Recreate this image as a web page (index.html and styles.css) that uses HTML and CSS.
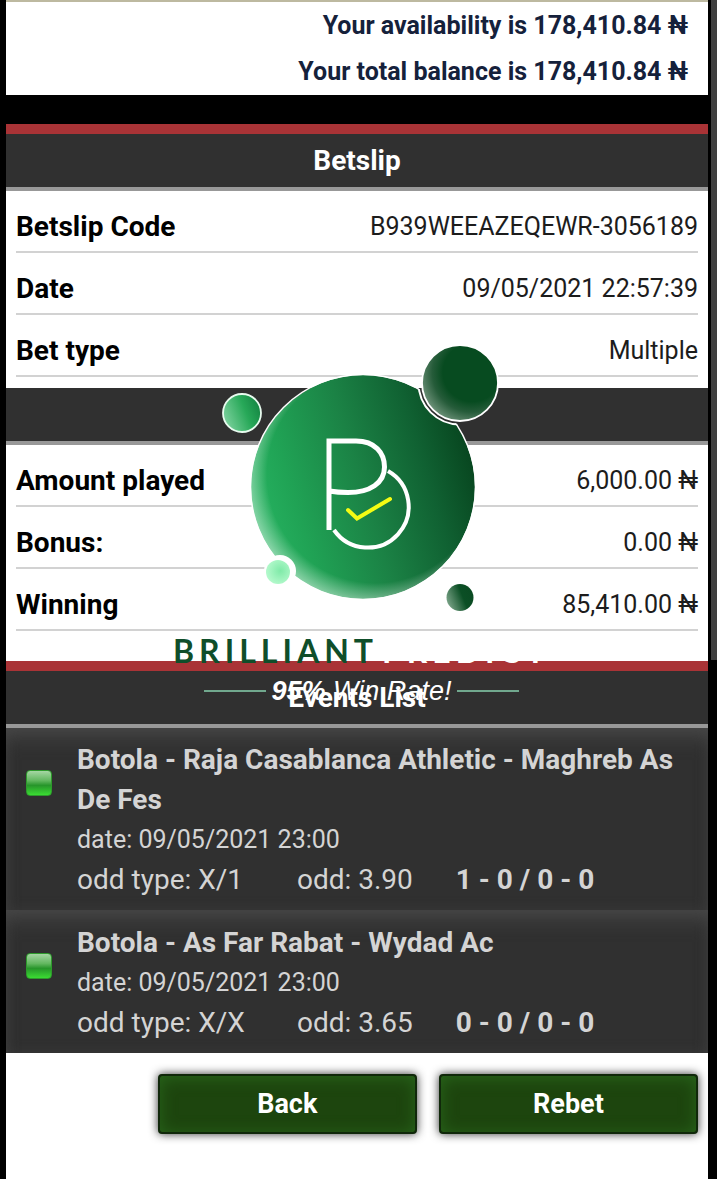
FILE: index.html
```html
<!DOCTYPE html>
<html lang="en">
<head>
<meta charset="utf-8">
<meta name="viewport" content="width=device-width, initial-scale=1">
<title>Betslip</title>
<link rel="stylesheet" href="styles.css">
</head>
<body>
<div class="scroll-thumb"></div>
<main class="page">
  <section class="balance">
    <p>Your availability is 178,410.84 ₦</p>
    <p>Your total balance is 178,410.84 ₦</p>
  </section>

  <div class="slip">
    <section>
      <h2 class="bar bar-accent">Betslip</h2>
      <dl class="rows">
        <div class="row"><dt>Betslip Code</dt><dd>B939WEEAZEQEWR-3056189</dd></div>
        <div class="row"><dt>Date</dt><dd>09/05/2021 22:57:39</dd></div>
        <div class="row"><dt>Bet type</dt><dd>Multiple</dd></div>
      </dl>
    </section>

    <section>
      <div class="bar"></div>
      <dl class="rows rows-last">
        <div class="row"><dt>Amount played</dt><dd>6,000.00 ₦</dd></div>
        <div class="row"><dt>Bonus:</dt><dd>0.00 ₦</dd></div>
        <div class="row"><dt>Winning</dt><dd>85,410.00 ₦</dd></div>
      </dl>
    </section>

    <section>
      <h2 class="bar bar-accent">Events List</h2>
      <ul class="events">
        <li class="event">
          <span class="status"></span>
          <div class="event-body">
            <h3>Botola - Raja Casablanca Athletic - Maghreb As De Fes</h3>
            <p class="date">date: 09/05/2021 23:00</p>
            <p class="odds"><span>odd type: X/1</span><span>odd: 3.90</span><b>1 - 0 / 0 - 0</b></p>
          </div>
        </li>
        <li class="event">
          <span class="status"></span>
          <div class="event-body">
            <h3>Botola - As Far Rabat - Wydad Ac</h3>
            <p class="date">date: 09/05/2021 23:00</p>
            <p class="odds"><span>odd type: X/X</span><span>odd: 3.65</span><b>0 - 0 / 0 - 0</b></p>
          </div>
        </li>
      </ul>
    </section>

    <div class="brand">
      <svg class="brand-logo" viewBox="0 0 300 280" width="300" height="280" aria-hidden="true">
        <defs>
          <linearGradient id="main" x1="0" y1="0.65" x2="1" y2="0.35">
            <stop offset="0" stop-color="#27b562"/>
            <stop offset="0.2" stop-color="#20a355"/>
            <stop offset="0.5" stop-color="#1b8245"/>
            <stop offset="0.78" stop-color="#106132"/>
            <stop offset="1" stop-color="#07441e"/>
          </linearGradient>
          <radialGradient id="sheen" gradientUnits="userSpaceOnUse" cx="163" cy="135" r="130">
            <stop offset="0.83" stop-color="#fff" stop-opacity="0"/>
            <stop offset="1" stop-color="#fff" stop-opacity="0.5"/>
          </radialGradient>
          <radialGradient id="dark" cx="0.66" cy="0.36" r="0.7">
            <stop offset="0.55" stop-color="#074b20"/>
            <stop offset="0.75" stop-color="#265c3a"/>
            <stop offset="1" stop-color="#6a8f76"/>
          </radialGradient>
          <linearGradient id="mid" x1="0" y1="0.7" x2="1" y2="0.3">
            <stop offset="0" stop-color="#7fd3a0"/>
            <stop offset="0.6" stop-color="#27a858"/>
            <stop offset="1" stop-color="#148442"/>
          </linearGradient>
          <linearGradient id="tiny" x1="0" y1="0.7" x2="1" y2="0.3">
            <stop offset="0" stop-color="#7da58a"/>
            <stop offset="0.6" stop-color="#0b4f25"/>
            <stop offset="1" stop-color="#0a4a22"/>
          </linearGradient>
          <radialGradient id="pale" cx="0.6" cy="0.45" r="0.6">
            <stop offset="0" stop-color="#7feaa8"/>
            <stop offset="1" stop-color="#b4f9cc"/>
          </radialGradient>
          <mask id="notch">
            <rect width="300" height="280" fill="#fff"/>
            <circle cx="248" cy="43" r="41" fill="#000"/>
          </mask>
          <clipPath id="disc"><circle cx="151" cy="147" r="113"/></clipPath>
        </defs>
        <g mask="url(#notch)">
          <circle cx="151" cy="147" r="112" fill="url(#main)"/>
          <circle cx="151" cy="147" r="112" fill="url(#sheen)"/>
          <circle cx="151" cy="147" r="112.5" fill="none" stroke="#fff" stroke-width="1.5"/>
        </g>
        <circle cx="248" cy="43" r="41.5" fill="none" stroke="#fff" stroke-width="2" clip-path="url(#disc)"/>
        <circle cx="248" cy="43" r="38" fill="url(#dark)" stroke="#fff" stroke-width="1.8"/>
        <circle cx="30" cy="73" r="19" fill="url(#mid)" stroke="#e8fbef" stroke-width="1.8"/>
        <circle cx="68" cy="231" r="16" fill="#fff"/>
        <circle cx="66" cy="232" r="12" fill="url(#pale)"/>
        <circle cx="248" cy="257.500" r="13.500" fill="url(#tiny)"/>
        <g fill="none" stroke="#fff" stroke-width="4">
          <path d="M117 190V101H144C163 101 172.500 113 172.500 127C172.500 143 158 152.500 136 152.500Q126 152.500 117 151" stroke-width="5"/>
          <path d="M176 131A41 41 0 1 1 122 190" />
          <path d="M136 170L145 178.500L178 159" stroke="#f4fb14" stroke-linecap="round"/>
        </g>
      </svg>
      <div class="brand-name"><span>BRILLIANT</span><span class="brand-light">PREDICT</span></div>
      <div class="tagline"><b>95%</b>&nbsp;Win Rate!</div>
    </div>
  </div>

  <div class="actions">
    <button type="button">Back</button>
    <button type="button">Rebet</button>
  </div>
</main>
</body>
</html>
```
FILE: styles.css
```css
* { box-sizing: border-box; }

body {
  margin: 0;
  background: #000;
  color: #000;
  font-family: Roboto, "Liberation Sans", sans-serif;
  font-size: 25px;
}

h2, h3, p, dl, dd, ul { margin: 0; padding: 0; }
ul { list-style: none; }

.scroll-thumb {
  position: fixed;
  top: 0;
  right: 0;
  width: 6px;
  height: 56vh;
  background: #3f3f3f;
}

.page {
  display: flex;
  flex-direction: column;
  min-height: 100vh;
  margin: 0 9px 0 6px;
}

.balance {
  padding: 1px 20px 0 10px;
  border-top: 2px solid #bdb9a0;
  background: #fff;
  color: #15213b;
  font-weight: 700;
  line-height: 46px;
  text-align: right;
}

.slip {
  position: relative;
  margin-top: 29px;
  background: #fff;
}

.bar {
  height: 57px;
  border-bottom: 4px solid #989898;
  background: #303030;
  color: #fff;
  font-size: 28px;
  font-weight: 700;
  line-height: 54px;
  text-align: center;
}

.bar-accent {
  height: 67px;
  border-top: 10px solid #a93336;
}

.rows { padding: 0 10px 11px; }
.rows-last { padding-bottom: 30px; }

.row {
  display: flex;
  justify-content: space-between;
  align-items: center;
  height: 62px;
  padding-top: 11px;
  border-bottom: 2px solid #d2d2d2;
}

.row dt { font-size: 28px; font-weight: 700; }
.row dd { color: #1c1c1c; }

.event {
  display: flex;
  padding: 12px 20px 10px;
  background: #303030;
  box-shadow: inset 0 16px 20px -8px #484848, inset 0 0 12px #383838;
  color: #d4d4d4;
  line-height: 40px;
}

.event + .event { padding-top: 13px; }

.event-body { flex: 1; }
.event h3 { font-size: 28px; font-weight: 700; }

.status {
  width: 26px;
  height: 26px;
  margin: 30px 25px 0 0;
  border: 1px solid #2d9a2b;
  border-radius: 4px;
  background: linear-gradient(#a5d6a3, #62b75f 40%, #27952a 60%, #3bdc33);
}

.odds {
  display: grid;
  grid-template-columns: 36fr 26fr 38fr;
  font-size: 28px;
}

.odds b { font-weight: 700; }

.brand {
  position: absolute;
  top: 216px;
  left: 9px;
  right: 0;
  display: flex;
  flex-direction: column;
  align-items: center;
}

.brand-logo { display: block; }

.brand-name {
  display: flex;
  gap: 4px;
  height: 54px;
  color: #0f4e2a;
  font-family: Lato, sans-serif;
  font-size: 32px;
  font-weight: 700;
  letter-spacing: 5px;
  line-height: 62px;
}

.brand-light { color: #fff; }

.tagline {
  display: flex;
  align-items: center;
  color: #fff;
  font-family: "Liberation Sans", sans-serif;
  font-size: 27px;
  font-style: italic;
  line-height: 34px;
}

.tagline::before,
.tagline::after {
  content: "";
  width: 62px;
  height: 2px;
  margin: 0 6px;
  background: #71a88e;
}

.actions {
  display: flex;
  flex: 1;
  justify-content: flex-end;
  align-items: flex-start;
  gap: 22px;
  padding: 21px 10px;
  background: #fff;
}

.actions button {
  width: 38%;
  height: 60px;
  border: 2px solid #10280a;
  border-radius: 4px;
  background: #1d450e;
  box-shadow: 0 0 10px #333, inset 0 2px 16px #28651b;
  color: #fff;
  font-family: inherit;
  font-size: 27px;
  font-weight: 700;
}
```
